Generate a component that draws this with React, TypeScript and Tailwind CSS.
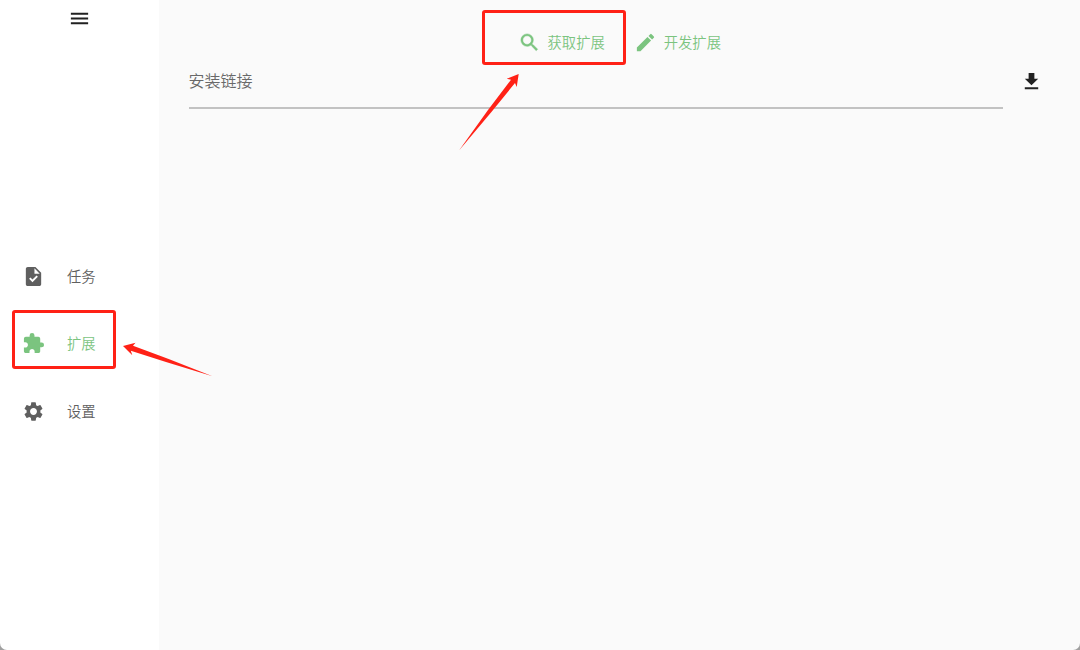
import type { ReactNode } from "react";
import {
  MdCreate,
  MdExtension,
  MdFileDownload,
  MdMenu,
  MdSearch,
  MdSettings,
  MdTask,
} from "react-icons/md";

type NavItemProps = {
  icon: ReactNode;
  label: string;
  active?: boolean;
};

const NavItem = ({ icon, label, active }: NavItemProps) => {
  return (
    <button
      className={`flex h-[67.3px] w-full items-center gap-[22px] pl-[22px] text-[14.3px] ${
        active ? "text-[#7bc47f]" : "text-[#5f5f5f]"
      }`}
    >
      {icon}
      <span className="-mt-0.5">{label}</span>
    </button>
  );
};

const Sidebar = () => {
  return (
    <aside className="flex w-[159px] shrink-0 flex-col bg-white">
      <button className="flex justify-center pt-[7px] text-[#212121]">
        <MdMenu size={23} />
      </button>
      <nav className="mt-[213px] flex flex-col">
        <NavItem icon={<MdTask size={23} />} label="任务" />
        <NavItem icon={<MdExtension size={23} />} label="扩展" active />
        <NavItem icon={<MdSettings size={23} />} label="设置" />
      </nav>
    </aside>
  );
};

const Extensions = () => {
  return (
    <main className="flex-1 bg-[#fafafa] pl-[29.5px] pr-[37px]">
      <div className="flex h-[60px] items-center justify-center gap-[29px] pl-[7px] pt-[25px] text-[14.3px] text-[#7bc47f]">
        <button className="flex items-center gap-[7px]">
          <MdSearch size={23} className="[&>path:last-child]:stroke-[0.5] [&>path:first-child]:stroke-none" />
          <span className="-mt-px">获取扩展</span>
        </button>
        <button className="flex items-center gap-[7px]">
          <MdCreate size={23} />
          <span className="-mt-px">开发扩展</span>
        </button>
      </div>

      <div className="flex gap-[17px]">
        <div className="h-[49px] flex-1 border-b-2 border-[#c2c2c2] pt-[7.5px] text-base leading-6 text-[#696969]">
          安装链接
        </div>
        <button className="flex h-[43px] items-center text-[#212121]">
          <MdFileDownload size={23} />
        </button>
      </div>
    </main>
  );
};

// Red boxes and arrows drawn over the window
const Annotations = () => {
  return (
    <>
      <div className="absolute left-[481.5px] top-[9.5px] h-[55.5px] w-[144.5px] rounded-[3px] border-3 border-[#ff2116]" />
      <div className="absolute left-[11.5px] top-[310px] h-[59px] w-[104px] rounded-[3px] border-3 border-[#ff2116]" />
      <svg
        className="absolute inset-0"
        width="1080"
        height="650"
        viewBox="0 0 1080 650"
        fill="#ff2116"
      >
        <path d="M518.7 74 L506.7 78.7 L511 79.8 L488 110 L459 150.5 L491 112.5 L515 83 L516.7 87 Z" />
        <path d="M123 346 L135.5 342.8 L133 345.8 L168 358.8 L212.5 376.3 L166 362 L130.8 350.7 L132.3 355.2 Z" />
      </svg>
    </>
  );
};

const App = () => {
  return (
    <div className="relative h-[650px] w-[1080px] overflow-hidden bg-[#a0a0a0] font-['Noto_Sans_CJK_SC',sans-serif] font-[350]">
      <div className="flex h-full overflow-hidden rounded-b-[7px]">
        <Sidebar />
        <Extensions />
      </div>
      <Annotations />
    </div>
  );
};

export default App;
